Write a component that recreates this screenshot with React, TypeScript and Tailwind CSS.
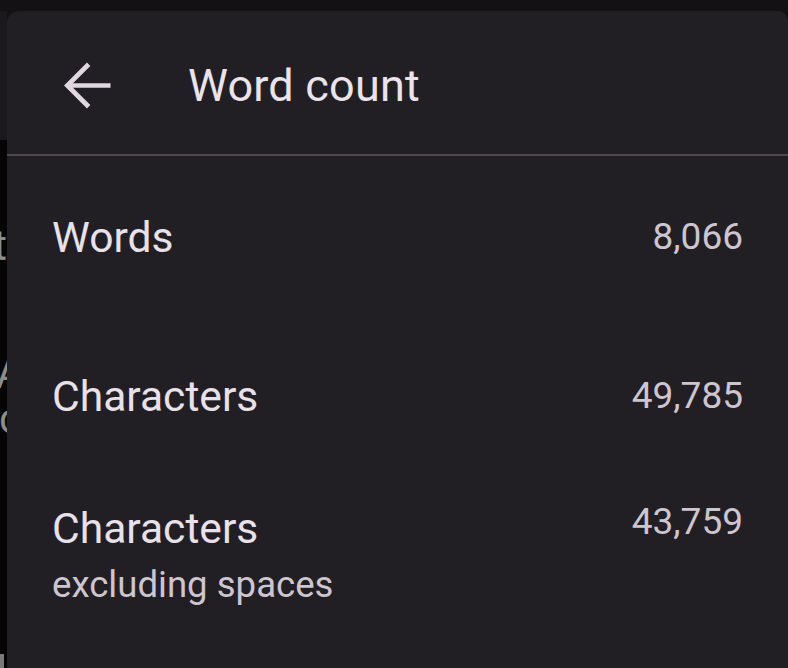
type Row = {
  label: string
  sub?: string
  value: string
}

const rows: Row[] = [
  { label: "Words", value: "8,066" },
  { label: "Characters", value: "49,785" },
  { label: "Characters", sub: "excluding spaces", value: "43,759" },
]

function BackArrow() {
  // arrow_back, drawn with a slightly thinner stroke than the material glyph
  return (
    <svg
      viewBox="0 0 24 24"
      className="w-[69px] h-[69px] shrink-0"
      fill="none"
      stroke="#e0d7e1"
      strokeWidth={1.65}
      strokeLinejoin="miter"
    >
      <path d="M20 12H5.6" />
      <path d="M12.4 4.6L5 12l7.4 7.4" />
    </svg>
  )
}

export default function App() {
  return (
    <div
      className="w-[788px] h-[668px] overflow-hidden flex flex-col bg-[#131114]"
      style={{ fontFamily: "Roboto, 'Noto Sans', sans-serif" }}
    >
      <div className="h-[11px] shrink-0" />
      <div className="flex flex-1 min-h-0">
        {/* page behind the sheet, mostly hidden */}
        <div className="w-[7px] shrink-0 flex flex-col bg-[#050505] overflow-hidden text-[42px] leading-none text-[#8c8c8c]">
          <div className="h-[129px] shrink-0 bg-[#1a181b]" />
          <div className="flex justify-end mt-[85px]">
            <span className="whitespace-nowrap">ext</span>
          </div>
          <div className="whitespace-nowrap -ml-[4px] mt-[86px]">Aa</div>
          <div className="whitespace-nowrap -ml-[1px] mt-[3px]">co</div>
          <div className="flex-1" />
          <div className="w-[4px] h-[14px] bg-[#7a7a7a]" />
        </div>

        <div className="flex-1 bg-[#221f24] rounded-tl-[12px] rounded-tr-[10px] flex flex-col">
          <header className="h-[143px] shrink-0 flex items-center pt-[5px] pl-[46px]">
            <BackArrow />
            <h1 className="ml-[66px] text-[45px] leading-none text-[#ebe3eb] tracking-[0.2px]">Word count</h1>
          </header>
          <div className="h-[2px] bg-[#4d464c] shrink-0" />

          <div className="flex flex-col pl-[45px] pr-[45px] pt-[57px]">
            {rows.map((row, i) => (
              <div
                key={i}
                className={`flex justify-between items-start ${i === 1 ? "mt-[111px]" : ""} ${i === 2 ? "mt-[84px]" : ""}`}
              >
                <div className="flex flex-col">
                  <span className="text-[42.6px] leading-[48px] text-[#e9e1ea]">{row.label}</span>
                  {row.sub && (
                    <span className="text-[36.6px] leading-[66px] text-[#cdc5cf]">{row.sub}</span>
                  )}
                </div>
                <span
                  className={`text-[37px] leading-[48px] text-[#cdc5cf] ${row.sub ? "-mt-[6px]" : ""}`}
                >
                  {row.value}
                </span>
              </div>
            ))}
          </div>
        </div>
      </div>
    </div>
  )
}
